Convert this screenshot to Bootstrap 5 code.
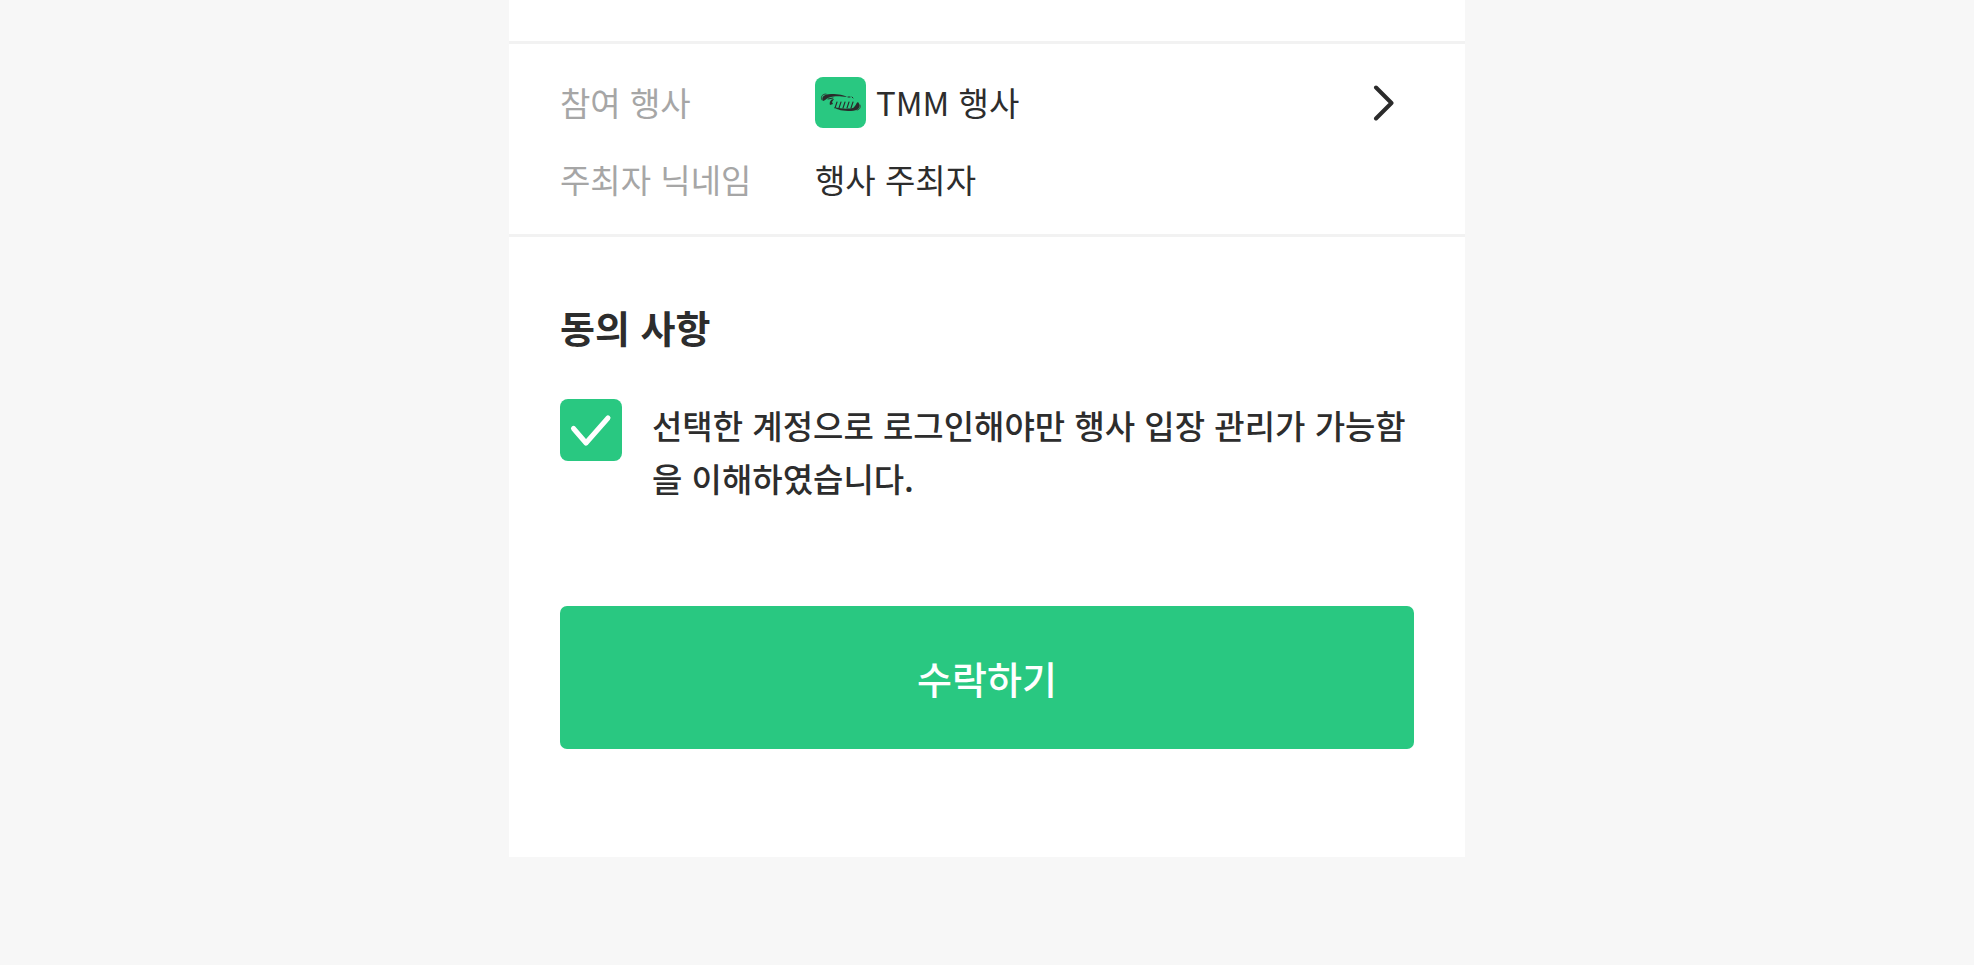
<!DOCTYPE html>
<html lang="ko">
<head>
<meta charset="utf-8">
<meta name="viewport" content="width=device-width, initial-scale=1">
<title>행사 관리 수락</title>
<link rel="stylesheet" href="https://cdn.jsdelivr.net/npm/bootstrap@5.3.0/dist/css/bootstrap.min.css">
<style>
  :root { --brand: #29c881; --ink: #2d2d2d; --line: #f2f2f2; --edge: 51px; }
  body { background: #f7f7f7; color: var(--ink); font-family: "Noto Sans CJK KR", sans-serif; font-size: 33px; line-height: 51px; }
  .sheet { max-width: 956px; padding-top: 41px; padding-bottom: 108px; }
  .event-info { border-top: 3px solid var(--line); border-bottom: 3px solid var(--line); padding: 33px var(--edge) 29px; row-gap: 26px; }
  .event-info dt { width: 255px; color: #a6a6a6; }
  .event-link { color: inherit; gap: 10px; padding-right: 19px; }
  .agreement { padding: 64px var(--edge) 0; }
  .agreement h2 { font-size: 38px; line-height: 51px; font-weight: 700; margin-bottom: 47px; }
  .agree-row { gap: 30px; margin-bottom: 101px; }
  .agree-row .form-check-input { width: 62px; height: 62px; border: 0; border-radius: 8px; background-color: #e4e4e4; }
  .agree-row .form-check-input:checked { background-color: var(--brand); background-size: 100%;
    background-image: url("data:image/svg+xml,%3Csvg xmlns='http://www.w3.org/2000/svg' viewBox='0 0 62 62'%3E%3Cpath d='M13.5 29.5 26 44 48 19' fill='none' stroke='%23fff' stroke-width='5' stroke-linecap='round' stroke-linejoin='round'/%3E%3C/svg%3E"); }
  .agree-row label { font-weight: 500; line-height: 53px; word-break: break-all; }
  .accept { --bs-btn-bg: var(--brand); --bs-btn-color: #fff; --bs-btn-hover-bg: #23b573; --bs-btn-hover-color: #fff;
    --bs-btn-active-bg: #1fa568; --bs-btn-active-color: #fff; --bs-btn-border-width: 0; --bs-btn-border-radius: 7px;
    --bs-btn-font-size: 38px; --bs-btn-font-weight: 500; --bs-btn-line-height: 55px; --bs-btn-padding-y: 44px; }
</style>
</head>
<body>
<main class="sheet bg-white mx-auto">
  <dl class="event-info d-flex flex-column mb-0">
    <div class="d-flex">
      <dt class="fw-normal flex-shrink-0">참여 행사</dt>
      <dd class="flex-grow-1 mb-0">
        <a href="#" class="event-link d-flex align-items-center text-decoration-none">
          <svg width="51" height="51" viewBox="0 0 51 51" aria-hidden="true">
            <rect width="51" height="51" rx="8" fill="#29c881"/>
            <g fill="#2b2b2b">
              <path d="M8 24C6 20 9 17 16 17C24 17 29 18 32 20C25 19 19 19 16 20C11 21 10 24 8 24Z"/>
              <path d="M43 25C47 30 43 34 36 34C28 34 22 33 19 30C26 32 34 32 38 31C41 29 41 26 43 25Z"/>
              <path d="M15 28c-1-3 1-6 4-6l-2 3 1 2z"/>
            </g>
            <g fill="none" stroke="#2b2b2b" stroke-linecap="round">
              <path d="M7 23C5 19 8 17 11 17M45 28C46 31 44 33 42 33" stroke-width=".8"/>
              <path d="M13 22l5-1M33 20h2M37 20l1 1" stroke-width="1"/>
              <path d="M22 25l-2 6M26 25l-2 6M30 25l-2 6M34 25l-2 6M38 25l-2 6" stroke-width="1.1"/>
            </g>
          </svg>
          <span class="flex-grow-1">TMM 행사</span>
          <svg width="22" height="36" viewBox="0 0 22 36" fill="none" stroke="#2b2b2b" stroke-width="4" stroke-linecap="round" stroke-linejoin="round" aria-hidden="true"><path d="M3 2.5 18.5 18 3 33.5"/></svg>
        </a>
      </dd>
    </div>
    <div class="d-flex">
      <dt class="fw-normal flex-shrink-0">주최자 닉네임</dt>
      <dd class="mb-0">행사 주최자</dd>
    </div>
  </dl>
  <form class="agreement">
    <h2>동의 사항</h2>
    <div class="agree-row d-flex align-items-start">
      <input class="form-check-input flex-shrink-0 m-0" type="checkbox" id="agree" checked>
      <label for="agree">선택한 계정으로 로그인해야만 행사 입장 관리가 가능함을 이해하였습니다.</label>
    </div>
    <button type="button" class="accept btn w-100">수락하기</button>
  </form>
</main>
<script src="https://cdn.jsdelivr.net/npm/bootstrap@5.3.0/dist/js/bootstrap.bundle.min.js"></script>
</body>
</html>
